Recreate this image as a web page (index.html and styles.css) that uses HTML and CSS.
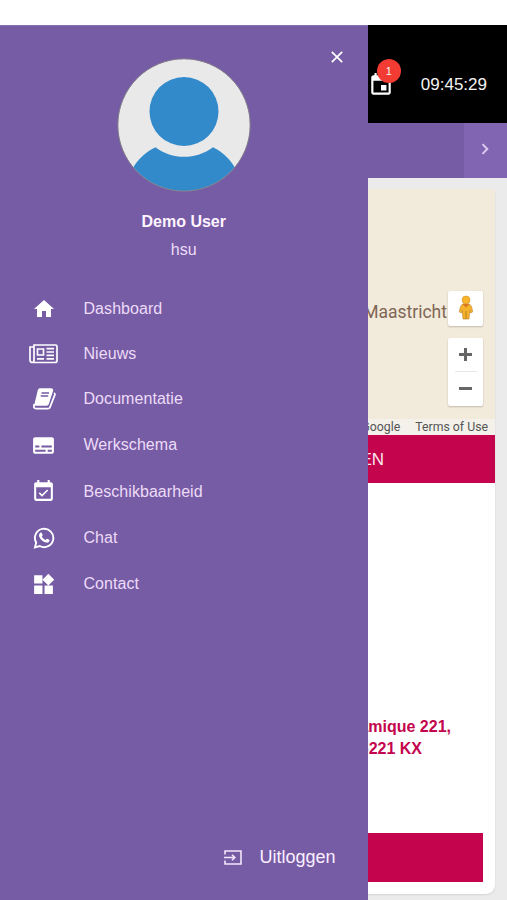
FILE: index.html
```html
<!DOCTYPE html>
<html lang="nl">
<head>
<meta charset="utf-8">
<title>Dashboard</title>
<link rel="stylesheet" href="styles.css">
</head>
<body>
<div class="app">
  <main class="page">
    <header class="topbar">
      <div class="calendar">
        <svg width="26" height="26" viewBox="0 0 24 24" fill="#fff"><path d="M17 12h-5v5h5v-5zM16 1v2H8V1H6v2H5c-1.100 0-2 .9-2 2v14c0 1.100.9 2 2 2h14c1.100 0 2-.9 2-2V5c0-1.100-.9-2-2-2h-1V1h-2zm3 18H5V8h14v11z"/></svg>
        <span class="badge">1</span>
      </div>
      <time class="clock">09:45:29</time>
    </header>
    <nav class="tabs">
      <button class="next" aria-label="Volgende"><svg width="8" height="12" viewBox="0 0 8 12" fill="none" stroke="#dfcdf0" stroke-width="1.900"><path d="M1.500 1.200 6.300 6 1.500 10.800"/></svg></button>
    </nav>
    <section class="card">
      <div class="map">
        <div class="place">Maastricht</div>
        <div class="controls">
          <div class="control pegman">
            <svg width="16" height="26" viewBox="0 0 16 26"><path d="M5 9h6q3 1 3.500 8l-2 1-.8-3-.7 9H5l-.7-9-.8 3-2-1Q2 10 5 9z" fill="#f5b32b" stroke="#c58b32" stroke-width=".7"/><path d="M8 16v8" stroke="#b77a22"/><circle cx="8" cy="5" r="4" fill="#f9b52b" stroke="#d19432" stroke-width=".6"/><path d="M4.500 9h7L8 12.500z" fill="#d97725"/></svg>
          </div>
          <div class="control zoom">
            <svg width="13" height="13" viewBox="0 0 13 13" stroke="#666" stroke-width="3"><path d="M0 6.500h13M6.500 0v13"/></svg>
            <span class="rule"></span>
            <svg width="13" height="13" viewBox="0 0 13 13" stroke="#666" stroke-width="3"><path d="M0 6.500h13"/></svg>
          </div>
        </div>
        <div class="terms"><span>Google</span><span>Terms of Use</span></div>
      </div>
      <div class="banner">EN</div>
      <div class="details">
        <address><div class="street">amique 221,</div><div class="postal">6221 KX</div></address>
        <div class="action"></div>
      </div>
    </section>
  </main>
  <aside class="drawer">
    <button class="close" aria-label="Sluiten"><svg width="12" height="12" viewBox="0 0 12 12" stroke="#fff" stroke-width="1.700"><path d="m.8.8 10.400 10.400M11.200.8.8 11.200"/></svg></button>
    <svg class="avatar" width="134" height="134" viewBox="0 0 134 134">
      <defs><clipPath id="face"><circle cx="67" cy="67" r="66"/></clipPath></defs>
      <circle cx="67" cy="67" r="66" fill="#e9e9e9"/>
      <g clip-path="url(#face)" fill="#338acb"><circle cx="67" cy="53.500" r="34.500"/><path d="M12 118Q20 98 38.500 89.200C55 102 79 102 96 89.200Q114 98 122 118V134H12z"/></g>
      <circle cx="67" cy="67" r="66.200" fill="none" stroke="#837f8b" stroke-width="1"/>
    </svg>
    <div class="name">Demo User</div>
    <div class="user">hsu</div>
    <ul class="menu">
      <li><span class="icon"><svg width="24" height="24" viewBox="0 0 24 24" fill="#fff"><path d="M10 20v-6h4v6h5v-8h3L12 3 2 12h3v8z"/></svg></span>Dashboard</li>
      <li><span class="icon"><svg width="29" height="20" viewBox="0 0 29 20" fill="none" stroke="#fff" stroke-width="1.700"><path d="M5 1h21.500q1.500 0 1.500 1.500v14q0 2-2 2H3.500Q1 18.500 1 16V3h4zM5 3v13q0 2.500-2 2.500"/><path d="M8.500 5h6v6h-6zM17.500 4.700H25M17.500 8H25M17.500 11.300H25M8 14.800h7M17.500 14.800H25"/></svg></span>Nieuws</li>
      <li><span class="icon"><svg width="24" height="24" viewBox="0 0 24 24" fill="none" stroke="#fff" stroke-width="1.500" stroke-linejoin="round"><path d="M8 2h11q1.800 0 1.300 1.800l-4 12.500Q15.900 18 14.500 18H3L6.500 3.300Q6.800 2 8 2z" fill="#fff"/><path d="M2.300 17Q1 21.700 4 21.700h12q1.500 0 2-1.500L22.800 8q.4-1.300-.8-2" stroke-width="1.800"/><path d="M9.500 6H17M8.700 9h7.500" stroke="#765ba5" stroke-width="1.300"/></svg></span>Documentatie</li>
      <li><span class="icon"><svg width="25" height="25" viewBox="0 0 24 24" fill="#fff"><path d="M20 4H4c-1.100 0-2 .9-2 2v12c0 1.100.9 2 2 2h16c1.100 0 2-.9 2-2V6c0-1.100-.9-2-2-2zM4 12h4v2H4v-2zm10 6H4v-2h10v2zm6 0h-4v-2h4v2zm0-4H10v-2h10v2z"/></svg></span>Werkschema</li>
      <li><span class="icon"><svg width="25" height="25" viewBox="0 0 24 24" fill="#fff"><path d="M16.530 11.060 15.470 10l-4.880 4.880-2.120-2.120-1.060 1.060L10.590 17l5.940-5.940zM19 3h-1V1h-2v2H8V1H6v2H5c-1.110 0-2 .9-2 2v14c0 1.100.89 2 2 2h14c1.100 0 2-.9 2-2V5c0-1.100-.9-2-2-2zm0 16H5V8h14v11z"/></svg></span>Beschikbaarheid</li>
      <li><span class="icon"><svg width="22" height="22" viewBox="0 0 22 22"><path d="M2 20.300 3.200 15.600A9.200 9.200 0 1 1 6.700 19z" fill="none" stroke="#fff" stroke-width="1.900"/><path d="M7.300 5.800c.5-.5 1.200-.4 1.500.2l.8 1.900c.2.500-.4 1.100-.8 1.600.9 1.700 2.100 2.800 3.900 3.500.5-.5 1-1.400 1.500-1.200l2 1c.4.2.4.500.3.900-.4 1.500-2.100 2.300-3.700 1.800-3.500-1-5.800-3.300-6.700-6.200-.3-1.300.3-2.800 1.200-3.500z" fill="#fff"/></svg></span>Chat</li>
      <li><span class="icon"><svg width="25" height="25" viewBox="0 0 24 24" fill="#fff"><path d="M13 13v8h8v-8h-8zM3 21h8v-8H3v8zM3 3v8h8V3H3zm13.660-1.310L11 7.340 16.660 13l5.660-5.660-5.660-5.650z"/></svg></span>Contact</li>
    </ul>
    <div class="logout"><svg width="18" height="15" viewBox="0 0 18 15" fill="none" stroke="#f4e6fa" stroke-width="1.600"><path d="M1 4.500V1h16v13H1v-3.500M0 7.500h10M8 4.700l2.800 2.800L8 10.300"/></svg><span>Uitloggen</span></div>
  </aside>
</div>
</body>
</html>
```
FILE: styles.css
```css
* { box-sizing: border-box; }
body { margin: 0; background: #fff; font-family: "Liberation Sans", Arial, sans-serif; }
button { padding: 0; border: 0; background: none; }
svg { display: block; flex: none; }

.app { position: relative; width: 507px; height: 900px; padding-top: 25px; overflow: hidden; }
.page { height: 875px; background: #ebebeb; }
.topbar { display: flex; justify-content: flex-end; align-items: center; height: 98px; padding: 21px 20px 0 0; background: #000; color: #f4f4f4; }
.calendar { position: relative; margin-right: 27px; }
.badge { position: absolute; left: 9px; top: -13px; width: 24px; height: 24px; border-radius: 50%; background: #f23b32; font-size: 11px; line-height: 24px; text-align: center; }
.clock { padding-top: 1px; font-size: 17px; line-height: 20px; }
.tabs { display: flex; justify-content: flex-end; height: 55px; background: #765ba5; }
.next { display: flex; width: 43px; align-items: center; justify-content: center; background: #8265b2; padding: 0 2px 3px 0; }

.card { display: flex; flex-direction: column; height: 705px; margin: 11px 12px 0; background: #fff; border-radius: 2px 2px 9px 9px; box-shadow: 0 1px 2px #d4d4d4; }
.map { display: grid; grid-template-columns: 1fr 35px; grid-template-rows: 1fr 16px; height: 246px; background: #f2eada; font-family: Roboto, sans-serif; padding-right: 12px; border-radius: 2px 2px 0 0; }
.place { padding: 112px 1px 0 0; text-align: right; font-size: 17.500px; line-height: 22px; color: #806655; }
.controls { padding-top: 102px; }
.control { display: flex; flex-direction: column; align-items: center; background: #fff; border-radius: 2px; box-shadow: 0 1px 2px #0003; }
.pegman { height: 35px; padding-top: 4px; }
.zoom { height: 68px; margin-top: 12px; padding: 10px 0 11px; justify-content: space-between; }
.rule { width: 22px; height: 1px; background: #e6e6e6; }
.terms { grid-column: 1 / 3; display: flex; justify-content: flex-end; gap: 15px; margin-right: -12px; padding-right: 7px; background: #f4f1eb; color: #555; font-size: 12.300px; line-height: 16px; }
.banner { height: 48px; padding-right: 111px; background: #c4044d; color: #fbe7ef; font-size: 17px; line-height: 49px; text-align: right; }
.details { display: flex; flex: 1; flex-direction: column; justify-content: space-between; padding: 233px 12px 12px; }
address { color: #c4044d; font-style: normal; font-size: 16px; font-weight: bold; line-height: 22px; text-align: right; }
.street { padding-right: 32px; }
.postal { padding-right: 61px; }
.action { height: 49px; background: #c4044d; }

.drawer { position: absolute; left: 0; top: 25px; bottom: 0; display: flex; flex-direction: column; align-items: center; width: 367.500px; background: #765ba5; color: #eddcf7; border-top: 1px solid #866fae; }
.close { align-self: flex-end; margin: 25px 25px 0 0; }
.avatar { margin-top: -5.500px; }
.name { margin-top: 20.500px; color: #fff5ff; font-size: 16px; font-weight: bold; line-height: 20px; }
.user { margin-top: 8px; font-size: 16px; line-height: 20px; }
.menu { display: grid; grid-template-rows: 45px 45px 46px 46px 47px 46px 46px; align-self: stretch; margin: 26px 0 0; padding: 0; list-style: none; font-size: 16px; letter-spacing: 0.060px; }
.menu li { display: flex; align-items: center; }
.icon { display: flex; justify-content: center; width: 40px; margin: 0 20px 0 23.500px; }
.logout { display: flex; align-items: center; align-self: flex-end; gap: 17px; margin: auto 32px 32px 0; color: #faefff; font-size: 18px; line-height: 22px; }
```
